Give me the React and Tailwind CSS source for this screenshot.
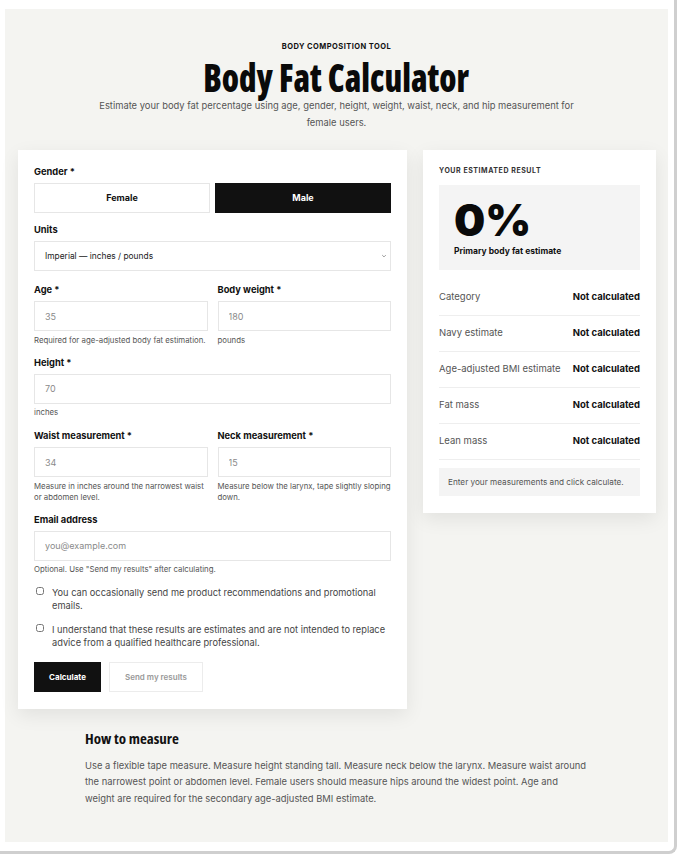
import { useState } from 'react';

const inter = { fontFamily: 'Inter, "Noto Sans", sans-serif' };
const condensed = { fontFamily: '"Open Sans", sans-serif', fontStretch: '75%' };

function Field({ label, placeholder, hint, className = '' }) {
  return (
    <div className={className}>
      <label className="block text-[9.3px] font-bold leading-[14px] text-[#111]">{label}</label>
      <input
        placeholder={placeholder}
        className="mt-[4px] block h-[30px] w-full border border-[#e6e6e6] bg-white px-[10px] text-[9px] text-[#333] placeholder:text-[#8a8a8a] outline-none"
      />
      {hint ? <p className="mt-[3.5px] text-[7.8px] leading-[11px] text-[#555]">{hint}</p> : null}
    </div>
  );
}

const rows = ['Category', 'Navy estimate', 'Age-adjusted BMI estimate', 'Fat mass', 'Lean mass'];

export default function App() {
  const [gender, setGender] = useState('male');

  return (
    <div className="h-[856px] w-[680px] bg-white" style={inter}>
      <div className="h-[854px] w-[677px] rounded-br-[8px] border-b-[3px] border-r-[3px] border-[#cfcfcf] pl-[5px] pt-[9px]">
        <div className="h-[833px] w-[663px] bg-[#f4f4f1] px-[13px] pt-[32px]">
          <div className="text-center">
            <p className="text-[7.5px] font-bold uppercase leading-[11px] tracking-[0.06em] text-[#111]">Body composition tool</p>
            <h1 className="mt-[5px] text-[38px] font-extrabold leading-[40px] text-[#0a0a0a]" style={condensed}>
              <span className="inline-block scale-x-[0.88]">Body Fat Calculator</span>
            </h1>
            <p className="mx-auto w-[490px] text-[9.4px] leading-[17px] text-[#555]">
              Estimate your body fat percentage using age, gender, height, weight, waist, neck, and hip measurement for female users.
            </p>
          </div>

          <div className="mt-[19px] flex items-start gap-[16px]">
            <div className="w-[389px] shrink-0 bg-white px-[16px] pb-[17px] pt-[15px] shadow-[0_6px_18px_rgba(0,0,0,0.08)]">
              <label className="block text-[9.3px] font-bold leading-[14px] text-[#111]">Gender *</label>
              <div className="mt-[4px] grid grid-cols-2 gap-[5px]">
                <button
                  onClick={() => setGender('female')}
                  className={`h-[30px] border text-[9px] font-bold ${gender === 'female' ? 'border-[#111] bg-[#111] text-white' : 'border-[#e6e6e6] bg-white text-[#111]'}`}
                >
                  Female
                </button>
                <button
                  onClick={() => setGender('male')}
                  className={`h-[30px] border text-[9px] font-bold ${gender === 'male' ? 'border-[#111] bg-[#111] text-white' : 'border-[#e6e6e6] bg-white text-[#111]'}`}
                >
                  Male
                </button>
              </div>

              <label className="mt-[10px] block text-[9.3px] font-bold leading-[14px] text-[#111]">Units</label>
              <div className="relative mt-[4px]">
                <select className="block h-[30px] w-full appearance-none border border-[#e6e6e6] bg-white px-[10px] text-[8.4px] text-[#222] outline-none">
                  <option>Imperial — inches / pounds</option>
                  <option>Metric — cm / kg</option>
                </select>
                <svg className="pointer-events-none absolute right-[4px] top-[12px] h-[6px] w-[6px]" viewBox="0 0 10 10" fill="none" stroke="#888" strokeWidth="1.4">
                  <path d="M2 3.5l3 3 3-3" />
                </svg>
              </div>

              <div className="mt-[12px] grid grid-cols-2 gap-[10px]">
                <Field label="Age *" placeholder="35" hint="Required for age-adjusted body fat estimation." />
                <Field label="Body weight *" placeholder="180" hint="pounds" />
              </div>

              <Field className="mt-[10px]" label="Height *" placeholder="70" hint="inches" />

              <div className="mt-[11px] grid grid-cols-2 gap-[10px]">
                <Field label="Waist measurement *" placeholder="34" hint="Measure in inches around the narrowest waist or abdomen level." />
                <Field label="Neck measurement *" placeholder="15" hint="Measure below the larynx, tape slightly sloping down." />
              </div>

              <Field className="mt-[10px]" label="Email address" placeholder="you@example.com" hint={'Optional. Use "Send my results" after calculating.'} />

              <div className="mt-[10.5px] flex flex-col gap-[11px]">
                <label className="flex items-start gap-[8px] text-[9.25px] leading-[13px] text-[#444]">
                  <input type="checkbox" className="mt-[1.5px] ml-[2px] h-[8px] w-[8px] shrink-0" />
                  <span>You can occasionally send me product recommendations and promotional emails.</span>
                </label>
                <label className="flex items-start gap-[8px] text-[9.25px] leading-[13px] text-[#444]">
                  <input type="checkbox" className="mt-[1.5px] ml-[2px] h-[8px] w-[8px] shrink-0" />
                  <span>I understand that these results are estimates and are not intended to replace advice from a qualified healthcare professional.</span>
                </label>
              </div>

              <div className="mt-[13.5px] flex gap-[8px]">
                <button className="h-[30px] w-[67px] bg-[#111] text-[8px] font-bold text-white">Calculate</button>
                <button className="h-[30px] w-[94px] border border-[#ececec] bg-white text-[8px] font-semibold text-[#999]">Send my results</button>
              </div>
            </div>

            <div className="w-[233px] shrink-0 bg-white px-[16px] pb-[17px] pt-[16px] shadow-[0_6px_18px_rgba(0,0,0,0.08)]">
              <p className="text-[7px] font-bold uppercase leading-[10.5px] tracking-[0.08em] text-[#333]">Your estimated result</p>
              <div className="mt-[8.5px] h-[85px] bg-[#f4f4f4] px-[15px] pt-[12px]">
                <div className="text-[44px] font-black leading-[46px] text-[#0a0a0a]">0%</div>
                <div className="mt-[2px] text-[8.5px] font-bold text-[#111]">Primary body fat estimate</div>
              </div>
              <div className="mt-[10px]">
                {rows.map((r) => (
                  <div key={r} className="flex h-[36px] items-center justify-between border-b border-[#eeeeee] text-[9.5px]">
                    <span className="text-[#555]">{r}</span>
                    <span className="font-bold text-[#111]">Not calculated</span>
                  </div>
                ))}
              </div>
              <div className="mt-[8px] flex h-[28px] items-center bg-[#f4f4f4] px-[9px] text-[8.2px] text-[#555]">
                Enter your measurements and click calculate.
              </div>
            </div>
          </div>

          <div className="mx-auto mt-[19px] w-[503px]">
            <h2 className="text-[15px] font-bold leading-[20px] text-[#111]" style={condensed}>
              How to measure
            </h2>
            <p className="mt-[9.75px] text-[9.4px] leading-[16.5px] text-[#555]">
              Use a flexible tape measure. Measure height standing tall. Measure neck below the larynx. Measure waist around the narrowest point or abdomen level. Female users should measure hips around the widest point. Age and weight are required for the secondary age-adjusted BMI estimate.
            </p>
          </div>
        </div>
      </div>
    </div>
  );
}
